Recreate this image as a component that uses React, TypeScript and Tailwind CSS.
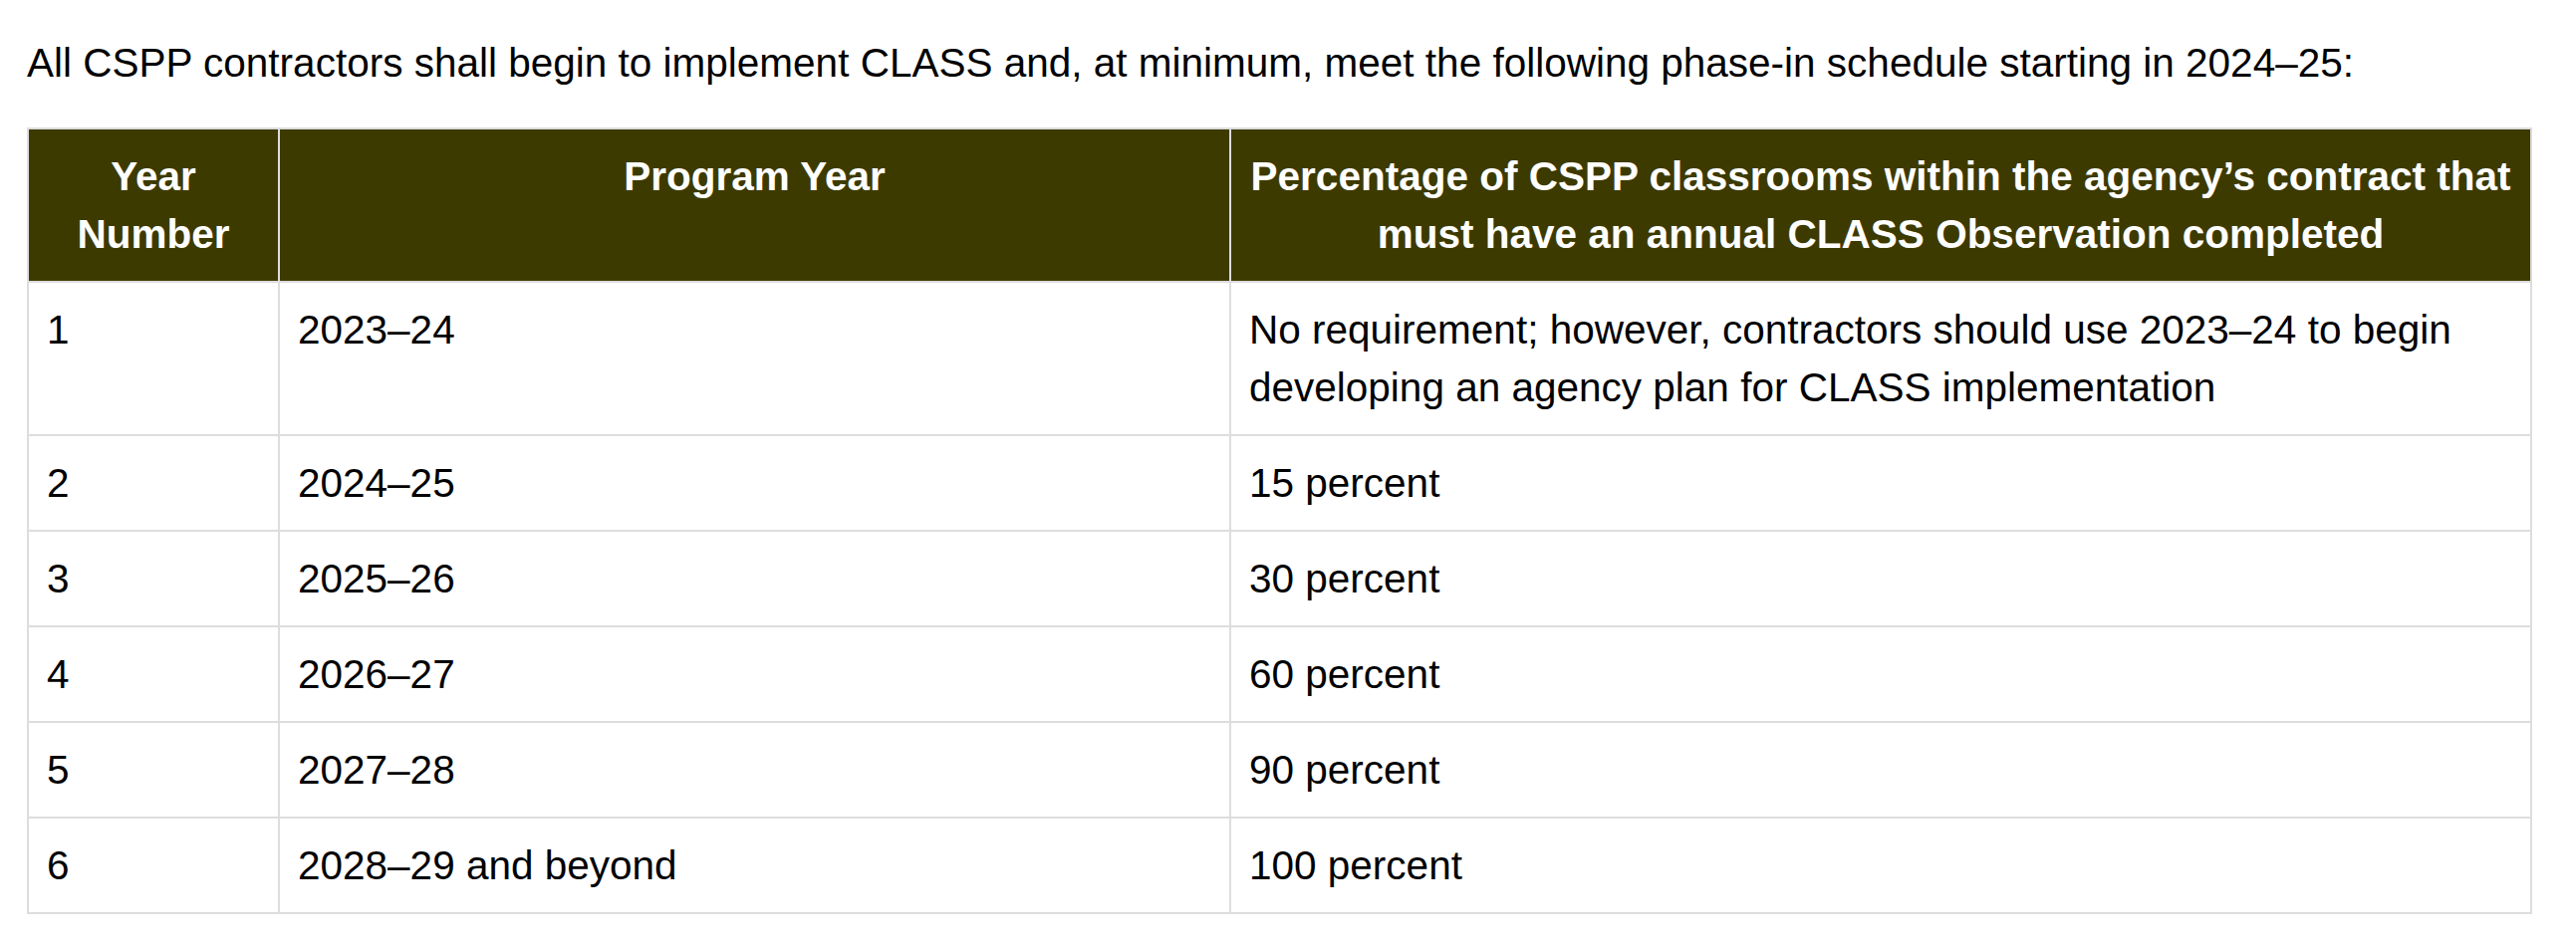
const rows = [
  {
    year: "1",
    program: "2023–24",
    pct: "No requirement; however, contractors should use 2023–24 to begin developing an agency plan for CLASS implementation",
  },
  { year: "2", program: "2024–25", pct: "15 percent" },
  { year: "3", program: "2025–26", pct: "30 percent" },
  { year: "4", program: "2026–27", pct: "60 percent" },
  { year: "5", program: "2027–28", pct: "90 percent" },
  { year: "6", program: "2028–29 and beyond", pct: "100 percent" },
];

const cell = "border-2 border-[#dddddd] px-[18px] py-[18px] align-top";

const App = () => {
  return (
    <div className="bg-white min-h-screen px-[27px] pt-[34px] text-black font-['Liberation_Sans',Arial,sans-serif] text-[40.5px] leading-[58px]">
      <p>
        All CSPP contractors shall begin to implement CLASS and, at minimum,
        meet the following phase-in schedule starting in 2024–25:
      </p>
      <table className="mt-[36px] w-[2513px] border-collapse table-fixed">
        <colgroup>
          <col className="w-[252px]" />
          <col className="w-[955px]" />
          <col className="w-[1306px]" />
        </colgroup>
        <thead>
          <tr className="bg-[#3d3a00] text-white font-bold">
            <th className={cell + " text-center"}>Year Number</th>
            <th className={cell + " text-center"}>Program Year</th>
            <th className={cell + " text-center"}>
              Percentage of CSPP classrooms within the agency’s contract that
              must have an annual CLASS Observation completed
            </th>
          </tr>
        </thead>
        <tbody>
          {rows.map((row) => (
            <tr key={row.year}>
              <td className={cell}>{row.year}</td>
              <td className={cell}>{row.program}</td>
              <td className={cell}>{row.pct}</td>
            </tr>
          ))}
        </tbody>
      </table>
    </div>
  );
};

export default App;
